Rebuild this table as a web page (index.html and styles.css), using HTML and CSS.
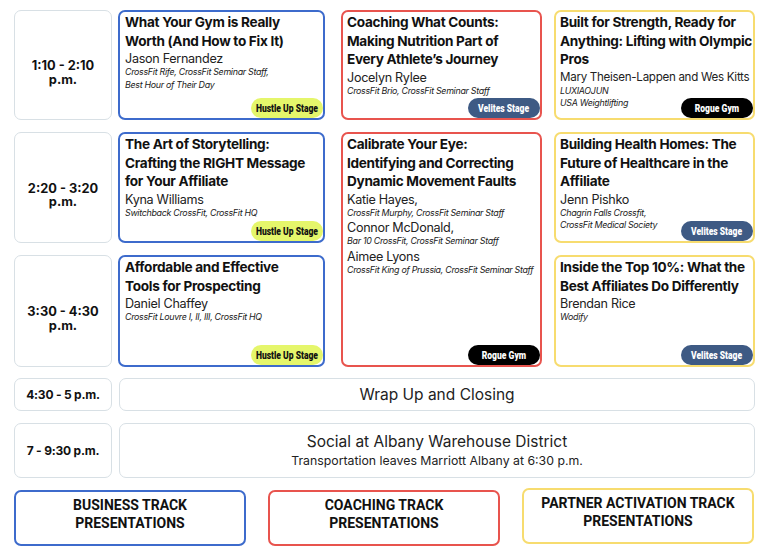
FILE: index.html
```html
<!DOCTYPE html>
<html lang="en">
<head>
<meta charset="utf-8">
<title>Schedule</title>
<link rel="stylesheet" href="styles.css">
</head>
<body>
<main class="page">
  <section class="schedule">
    <div class="time r1"><span>1:10 - 2:10<br>p.m.</span></div>
    <article class="card business c1 r1">
      <h3 class="title">What Your Gym is Really<br>Worth (And How to Fix It)</h3>
      <p class="name">Jason Fernandez</p>
      <p class="aff">CrossFit Rife, CrossFit Seminar Staff,<br>Best Hour of Their Day</p>
      <span class="badge hustle"><span class="cond">Hustle Up Stage</span></span>
    </article>
    <article class="card coaching c2 r1">
      <h3 class="title">Coaching What Counts:<br>Making Nutrition Part of<br>Every Athlete’s Journey</h3>
      <p class="name">Jocelyn Rylee</p>
      <p class="aff">CrossFit Brio, CrossFit Seminar Staff</p>
      <span class="badge velites"><span class="cond">Velites Stage</span></span>
    </article>
    <article class="card partner c3 r1">
      <h3 class="title">Built for Strength, Ready for<br>Anything: Lifting with Olympic<br>Pros</h3>
      <p class="name long">Mary Theisen-Lappen and Wes Kitts</p>
      <p class="aff">LUXIAOJUN<br>USA Weightlifting</p>
      <span class="badge rogue"><span class="cond">Rogue Gym</span></span>
    </article>

    <div class="time r2"><span>2:20 - 3:20<br>p.m.</span></div>
    <article class="card business c1 r2">
      <h3 class="title">The Art of Storytelling:<br>Crafting the RIGHT Message<br>for Your Affiliate</h3>
      <p class="name">Kyna Williams</p>
      <p class="aff">Switchback CrossFit, CrossFit HQ</p>
      <span class="badge hustle"><span class="cond">Hustle Up Stage</span></span>
    </article>
    <article class="card coaching c2 r2 span2">
      <h3 class="title">Calibrate Your Eye:<br>Identifying and Correcting<br>Dynamic Movement Faults</h3>
      <p class="name">Katie Hayes,</p>
      <p class="aff">CrossFit Murphy, CrossFit Seminar Staff</p>
      <p class="name">Connor McDonald,</p>
      <p class="aff">Bar 10 CrossFit, CrossFit Seminar Staff</p>
      <p class="name">Aimee Lyons</p>
      <p class="aff">CrossFit King of Prussia, CrossFit Seminar Staff</p>
      <span class="badge rogue"><span class="cond">Rogue Gym</span></span>
    </article>
    <article class="card partner c3 r2">
      <h3 class="title">Building Health Homes: The<br>Future of Healthcare in the<br>Affiliate</h3>
      <p class="name">Jenn Pishko</p>
      <p class="aff">Chagrin Falls Crossfit,<br>CrossFit Medical Society</p>
      <span class="badge velites"><span class="cond">Velites Stage</span></span>
    </article>

    <div class="time r3"><span>3:30 - 4:30<br>p.m.</span></div>
    <article class="card business c1 r3">
      <h3 class="title">Affordable and Effective<br>Tools for Prospecting</h3>
      <p class="name">Daniel Chaffey</p>
      <p class="aff">CrossFit Louvre I, II, III, CrossFit HQ</p>
      <span class="badge hustle"><span class="cond">Hustle Up Stage</span></span>
    </article>
    <article class="card partner c3 r3">
      <h3 class="title">Inside the Top 10%: What the<br>Best Affiliates Do Differently</h3>
      <p class="name">Brendan Rice</p>
      <p class="aff">Wodify</p>
      <span class="badge velites"><span class="cond">Velites Stage</span></span>
    </article>
  </section>

  <section class="wide-rows">
    <div class="wide-row short">
      <div class="time-sm">4:30 - 5 p.m.</div>
      <div class="event"><p class="event-title">Wrap Up and Closing</p></div>
    </div>
    <div class="wide-row tall">
      <div class="time-sm">7 - 9:30 p.m.</div>
      <div class="event">
        <p class="event-title">Social at Albany Warehouse District</p>
        <p class="event-sub">Transportation leaves Marriott Albany at 6:30 p.m.</p>
      </div>
    </div>
  </section>

  <section class="legend">
    <div class="legend-box business">BUSINESS TRACK<br>PRESENTATIONS</div>
    <div class="legend-box coaching">COACHING TRACK<br>PRESENTATIONS</div>
    <div class="legend-box partner up">PARTNER ACTIVATION TRACK<br>PRESENTATIONS</div>
  </section>
</main>
</body>
</html>
```

FILE: styles.css
```css
* { box-sizing: border-box; }
html, body { margin: 0; padding: 0; background: #fff; }
body {
  font-family: Inter, "Noto Sans", "DejaVu Sans", sans-serif;
  color: #1c1c1c;
}
p, h3 { margin: 0; }

.page {
  width: 768px;
  padding: 10px 13px 0 14px;
}

.schedule {
  display: grid;
  grid-template-columns: 98px 213px 217px 213px;
  grid-template-rows: 110px 111px 112px;
  row-gap: 12px;
}
.r1 { grid-row: 1; }
.r2 { grid-row: 2; }
.r3 { grid-row: 3; }
.span2 { grid-row: 2 / span 2; }
.time { grid-column: 1; }
.c1 { grid-column: 2; margin-left: 6px; }
.c2 { grid-column: 3; margin-left: 16px; }
.c3 { grid-column: 4; margin-left: 12px; }

.time {
  border: 1.5px solid #d8e0e5;
  border-radius: 7px;
  display: flex;
  align-items: center;
  justify-content: center;
  text-align: center;
  padding-top: 15px;
  font-weight: 700;
  font-size: 12.8px;
  line-height: 13.5px;
  color: #111;
}

.card {
  position: relative;
  border: 2px solid;
  border-radius: 7px;
  padding: 1px 0 0 4px;
}
.card.business { border-color: #3d6bcc; }
.card.coaching { border-color: #e8544e; }
.card.partner { border-color: #f7dc6f; }
.c1.card { padding-left: 5px; }

.title {
  font-size: 13.6px;
  font-weight: 700;
  letter-spacing: -0.3px;
  line-height: 18.5px;
  color: #111;
  white-space: nowrap;
}
.name {
  font-size: 12.6px;
  letter-spacing: -0.3px;
  line-height: 15px;
  margin-top: 1px;
  color: #222;
  white-space: nowrap;
}
.name.long { font-size: 11.6px; }
.aff {
  font-size: 8.9px;
  font-style: italic;
  letter-spacing: -0.3px;
  line-height: 12.5px;
  color: #1a1a1a;
  white-space: nowrap;
}

.badge {
  position: absolute;
  right: 0;
  bottom: 0;
  width: 72px;
  height: 20px;
  border-radius: 10px;
  display: flex;
  align-items: center;
  justify-content: center;
  font-family: Roboto, "Liberation Sans", sans-serif;
  font-weight: 900;
  font-size: 11.5px;
  white-space: nowrap;
}
.badge .cond { display: inline-block; transform: scaleX(0.74); }
.hustle { background: #e5f66b; color: #111; }
.velites { background: #3e5a84; color: #fff; }
.rogue { background: #000; color: #fff; }

.wide-rows {
  display: flex;
  flex-direction: column;
  gap: 12px;
  margin-top: 11px;
}
.wide-row {
  display: flex;
  gap: 7px;
}
.wide-row.short { height: 33px; }
.wide-row.tall { height: 55px; }
.time-sm {
  width: 98px;
  flex: none;
  border: 1.5px solid #d8e0e5;
  border-radius: 7px;
  display: flex;
  align-items: center;
  justify-content: center;
  font-weight: 700;
  font-size: 12px;
  letter-spacing: -0.2px;
  white-space: nowrap;
  color: #111;
}
.event {
  flex: 1;
  border: 1.5px solid #d8e0e5;
  border-radius: 7px;
  display: flex;
  flex-direction: column;
  align-items: center;
  justify-content: center;
  text-align: center;
  color: #222;
}
.event-title {
  font-size: 15.5px;
  line-height: 19px;
}
.event-sub {
  font-size: 12.3px;
  line-height: 16px;
  margin-top: 2px;
}

.legend {
  display: flex;
  gap: 22px;
  margin-top: 12px;
}
.legend-box {
  width: 232px;
  height: 56px;
  border: 2px solid;
  border-radius: 7px;
  text-align: center;
  padding-top: 4px;
  font-family: Roboto, "Liberation Sans", sans-serif;
  font-weight: 700;
  font-size: 14px;
  line-height: 18px;
  color: #111;
  white-space: nowrap;
}
.legend-box.business { border-color: #3d6bcc; }
.legend-box.coaching { border-color: #e8544e; }
.legend-box.partner { border-color: #f7dc6f; }
.legend-box.up { margin-top: -2px; }
```
